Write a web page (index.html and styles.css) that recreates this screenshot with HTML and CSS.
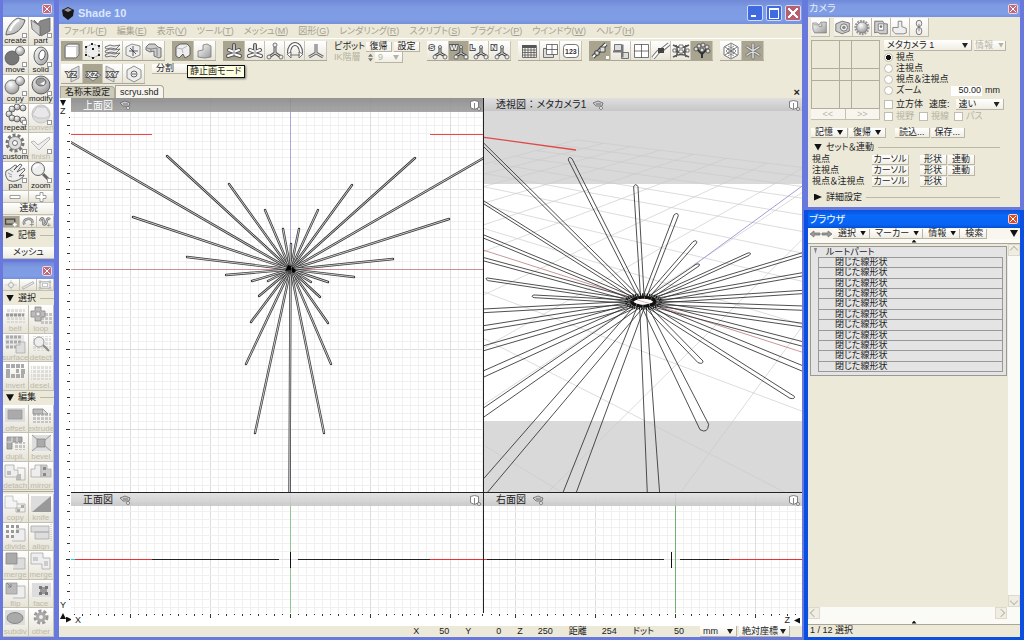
FILE: index.html
```
<!DOCTYPE html>
<html lang="ja">
<head>
    <meta charset="utf-8">
    <title>Shade 10</title>
    <link rel="stylesheet" href="styles.css">
</head>
<body>
    <svg class="defs" aria-hidden="true">
        <defs>
            <linearGradient id="metal" x1="0" y1="0" x2="1" y2="1"><stop offset="0" stop-color="#fff"/><stop offset="1" stop-color="#999"/></linearGradient>
            <radialGradient id="ball" cx=".4" cy=".3" r=".7"><stop offset="0" stop-color="#fff"/><stop offset="1" stop-color="#999"/></radialGradient>
            <pattern id="dots" width="4" height="4" patternUnits="userSpaceOnUse"><rect width="3" height="3" fill="#c4c4c4"/></pattern>
        </defs>
        <!-- tool palette -->
        <symbol id="create" viewBox="0 0 24 20"><path d="M3 18C3 12 9 3 15 1l7 2c-1 6-7 13-13 14z" fill="url(#metal)" stroke="#444"/><path d="M7 14c1-4 5-9 9-11" fill="none" stroke="#fff" stroke-width="2"/></symbol>
        <symbol id="part" viewBox="0 0 24 20"><path d="M5 3l4 4 2-3 10-3v13l-9 5z" fill="#888" stroke="#666"/><path d="M2 3l9 6v10l-8-7z" fill="#ccc" stroke="#666"/></symbol>
        <symbol id="move" viewBox="0 0 24 20"><circle cx="9" cy="12" r="7" fill="#777" stroke="#555"/><circle cx="17" cy="5" r="4.500" fill="url(#ball)" stroke="#555"/></symbol>
        <symbol id="solid" viewBox="0 0 24 20"><ellipse cx="12" cy="10" rx="7" ry="9" fill="url(#metal)" stroke="#444"/><ellipse cx="13" cy="9" rx="3" ry="5" fill="#fff" stroke="#444" transform="rotate(15 13 9)"/></symbol>
        <symbol id="copyball" viewBox="0 0 24 20"><circle cx="9" cy="12" r="7" fill="url(#ball)" stroke="#555"/><circle cx="17" cy="6" r="4.500" fill="url(#ball)" stroke="#555"/></symbol>
        <symbol id="modify" viewBox="0 0 24 20"><circle cx="12" cy="10" r="9" fill="url(#ball)" stroke="#444"/><ellipse cx="12" cy="7" rx="5" ry="4" fill="#999" stroke="#555"/><path d="M11 9l5-3-1 4z" fill="#fff"/></symbol>
        <symbol id="repeat" viewBox="0 0 24 20"><g fill="url(#ball)" stroke="#555"><circle cx="20" cy="4" r="3"/><circle cx="14" cy="3" r="3"/><circle cx="9" cy="5" r="3"/><circle cx="6" cy="10" r="3"/><circle cx="9" cy="14" r="3"/><circle cx="14" cy="15" r="3"/><circle cx="20" cy="16" r="3"/></g></symbol>
        <symbol id="convert" viewBox="0 0 24 20"><circle cx="12" cy="10" r="9" fill="#ddd" stroke="#bbb"/><path d="M3 11l6 3 8 0 4-3-4-8H8z" fill="#e8e8e8" stroke="#bbb"/></symbol>
        <symbol id="custom" viewBox="0 0 24 20"><circle cx="12" cy="10" r="8" fill="none" stroke="#777" stroke-width="3" stroke-dasharray="3 2"/><circle cx="12" cy="10" r="6.500" fill="#ddd" stroke="#666"/><circle cx="12" cy="10" r="2.500" fill="#fff" stroke="#555"/></symbol>
        <symbol id="finish" viewBox="0 0 24 20"><path d="M2 9l3-1 4 4 11-8 1 2-11 11z" fill="#eee" stroke="#aaa"/></symbol>
        <symbol id="pan" viewBox="0 0 24 20"><path d="M5 18c-2-3-3-5-2-9l4-2 5-4 2 1-3 4 6-6 2 1-5 7 7-4 1 2-6 6 5-1-1 2c-4 3-8 5-12 4z" fill="#eee" stroke="#444"/><path d="M7 8l3 2m-5 1l4 2m-3 1l3 1" stroke="#888"/></symbol>
        <symbol id="zoom" viewBox="0 0 24 20"><path d="M14 12l7 7" stroke="#666" stroke-width="3"/><circle cx="9" cy="7" r="6.500" fill="#eee" stroke="#444"/><path d="M5 6a5 5 0 0 1 5-3" stroke="#fff" stroke-width="2" fill="none"/></symbol>
        <symbol id="minus" viewBox="0 0 12 10"><path d="M1 3.500h10v3H1z" fill="#fff" stroke="#888"/></symbol>
        <symbol id="plus" viewBox="0 0 12 10"><path d="M5 .5h3v3h3v3H8v3H5v-3H1v-3h4z" fill="#fff" stroke="#888"/></symbol>
        <symbol id="sel-box" viewBox="0 0 16 12"><path d="M1.500 2.500h11v6h-11z" fill="none" stroke="#444" stroke-width="1.500"/><path d="M10 9h5m-2.500-2.500v5" stroke="#fff" stroke-width="2"/></symbol>
        <symbol id="sel-loop" viewBox="0 0 16 12"><path d="M4 9C-1 2 15-1 13 7" fill="none" stroke="#777" stroke-width="3"/><path d="M4 9C-1 2 15-1 13 7" fill="none" stroke="#fff"/><path d="M10 9h5m-2.500-2.500v5" stroke="#777"/></symbol>
        <symbol id="sel-free" viewBox="0 0 16 12"><path d="M2 5c2-6 5-3 4 1s3 4 4-1 3-3 4-2" fill="none" stroke="#777" stroke-width="3"/><path d="M2 5c2-6 5-3 4 1s3 4 4-1 3-3 4-2" fill="none" stroke="#fff"/><path d="M10 10h5m-2.500-2.500v4" stroke="#777"/></symbol>
        <!-- mesh palette -->
        <symbol id="m-vertex" viewBox="0 0 16 12"><path d="M8 0v12M1 6h14" stroke="#bbb"/><circle cx="8" cy="6" r="3" fill="#eee" stroke="#999"/></symbol>
        <symbol id="m-edge" viewBox="0 0 16 12"><path d="M1 9l13-7 1 2-13 7z" fill="#eee" stroke="#999"/></symbol>
        <symbol id="m-face" viewBox="0 0 16 12"><path d="M2 2h12v8H2z" fill="#eee" stroke="#999"/><path d="M5 4h6v4H5zM1 1h2v2H1zM13 1h2v2h-2zM1 9h2v2H1zM13 9h2v2h-2z" fill="#fff" stroke="#999" stroke-width=".7"/></symbol>
        <symbol id="belt" viewBox="0 0 24 20"><rect x="3" y="3" width="19" height="15" fill="url(#dots)" opacity=".5"/><path d="M3 10h18" stroke="#999" stroke-width="3" stroke-dasharray="3 1"/></symbol>
        <symbol id="loop" viewBox="0 0 24 20"><rect x="12" y="8" width="11" height="11" fill="url(#dots)"/><path d="M6 2h6v4h4v6h-4v4H6v-4H2V6h4z" fill="#bbb" stroke="#888"/><path d="M7 7h4v4H7z" fill="#eee" stroke="#888"/></symbol>
        <symbol id="surface" viewBox="0 0 24 20"><path d="M2 1h19v13H2z" fill="#e8e8e8"/><path d="M3 3h16M3 8h16M3 13h16" stroke="#aaa" stroke-width="3" stroke-dasharray="3 1"/><path d="M13 19v-8h4V8h5v11z" fill="#ddd" stroke="#aaa"/></symbol>
        <symbol id="detect" viewBox="0 0 24 20"><rect x="3" y="2" width="19" height="15" fill="url(#dots)" opacity=".5"/><path d="M14 11l6 6" stroke="#888" stroke-width="2"/><circle cx="10" cy="8" r="5" fill="#eee" stroke="#888"/></symbol>
        <symbol id="invert" viewBox="0 0 24 20"><path d="M3 4h18M3 14h18" stroke="#aaa" stroke-width="4" stroke-dasharray="4 1"/><path d="M3 7h4v5H3zM13 7h3v4h-3zM18 7h4v5h-4z" fill="#aaa"/></symbol>
        <symbol id="desel" viewBox="0 0 24 20"><rect x="2" y="3" width="20" height="15" fill="url(#dots)" opacity=".5"/></symbol>
        <symbol id="offset" viewBox="0 0 24 20"><path d="M2 3h20v14H2z" fill="#ddd"/><path d="M5 5h14v9H5z" fill="#aaa" stroke="#999"/></symbol>
        <symbol id="extrude" viewBox="0 0 24 20"><rect x="3" y="8" width="19" height="10" fill="url(#dots)"/><path d="M4 4h10v5H4z" fill="#bbb" stroke="#888"/><path d="M14 4l5 5-5 0" fill="#ddd" stroke="#888"/></symbol>
        <symbol id="dupli" viewBox="0 0 24 20"><rect x="12" y="9" width="10" height="8" fill="url(#dots)"/><path d="M4 4h15v5H9v7H4z" fill="#aaa" stroke="#888"/><path d="M9 4v5H4m10-5v5" fill="none" stroke="#eee"/></symbol>
        <symbol id="bevel" viewBox="0 0 24 20"><path d="M3 2h19v16H3z" fill="#ddd"/><path d="M3 2l6 5m7 0l6-5M9 13l-6 5m13-5l6 5" stroke="#888"/><path d="M8 6h8v8H8z" fill="#aaa" stroke="#888"/></symbol>
        <symbol id="detach" viewBox="0 0 24 20"><path d="M2 3h9v5h4v7H2z" fill="#eee" stroke="#aaa"/><path d="M4 9h4v4H4zM15 12h3v6h-5v-4z" fill="#bbb"/><path d="M14 6h8v12h-9" fill="none" stroke="#aaa"/></symbol>
        <symbol id="mirror" viewBox="0 0 24 20"><path d="M2 7h4V3h6v12H2z" fill="#eee" stroke="#aaa"/><path d="M22 7h-4V3h-6v12h10z" fill="#ccc" stroke="#aaa"/><path d="M14 5h3v3h-3zM14 11h3v3h-3z" fill="#888"/></symbol>
        <symbol id="facecopy" viewBox="0 0 24 20"><path d="M2 2h8v5h4v7H2z" fill="#f4f4f4" stroke="#bbb"/><path d="M14 10h8v8h-9v-4h5" fill="none" stroke="#aaa"/><path d="M14 15h3v3h-3zM18 11h3v3h-3z" fill="#aaa"/></symbol>
        <symbol id="knife" viewBox="0 0 24 20"><path d="M2 2h20v16H2z" fill="#ddd"/><path d="M22 2v16H3z" fill="#999"/></symbol>
        <symbol id="divide" viewBox="0 0 24 20"><path d="M13 6h9v12H9" fill="#eee" stroke="#aaa"/><path d="M3 2h3v3H3zM8 2h3v3H8zM13 2h3v3h-3zM3 7h3v3H3zM8 7h3v3H8zM13 7h3v3h-3zM3 12h3v3H3zM8 12h3v3H8z" fill="#999"/></symbol>
        <symbol id="align" viewBox="0 0 24 20"><path d="M2 3h18v6H2zM6 9h14v7H6z" fill="#ddd" stroke="#aaa"/><path d="M22 1v17" stroke="#aaa" stroke-dasharray="1 1"/></symbol>
        <symbol id="merge" viewBox="0 0 24 20"><path d="M12 7h10v11H10" fill="#ddd" stroke="#aaa"/><path d="M3 2h11v11H3z" fill="#aaa" stroke="#888"/></symbol>
        <symbol id="merge2" viewBox="0 0 24 20"><path d="M2 2h12v5h7v11h-8v-5H2z" fill="#eee" stroke="#aaa"/><path d="M4 6h5v4H4zM15 10h4v5h-4z" fill="#ccc"/></symbol>
        <symbol id="flip" viewBox="0 0 24 20"><path d="M12 6h10v12H10" fill="#eee" stroke="#aaa"/><path d="M3 3h11v11H3z" fill="#bbb" stroke="#999"/><path d="M4 3l4 4v-3m0 3H5" stroke="#777" fill="none"/></symbol>
        <symbol id="face" viewBox="0 0 24 20"><path d="M3 3h19v14H3z" fill="#ddd"/><path d="M11 7h7v7h-7z" fill="#999"/><path d="M10 6h3v3h-3zM16 6h3v3h-3zM10 12h3v3h-3zM16 12h3v3h-3z" fill="#777"/></symbol>
        <symbol id="subdiv" viewBox="0 0 24 20"><path d="M2 2h20v15H2z" fill="#ddd"/><ellipse cx="12" cy="10" rx="8" ry="5.500" fill="#aaa" stroke="#777"/></symbol>
        <symbol id="other" viewBox="0 0 24 20"><circle cx="12" cy="9" r="6" fill="none" stroke="#999" stroke-width="3" stroke-dasharray="3 2"/><circle cx="12" cy="9" r="5" fill="#aaa"/><circle cx="12" cy="9" r="2" fill="#eee"/></symbol>
        <!-- main toolbar, 20 x 18 -->
        <symbol id="cube" viewBox="0 0 20 18"><path d="M3 4l3-2h11v11l-3 3H3z" fill="#ccc" stroke="#666"/><path d="M4 5h10v10H4zM5 4l2-1h9l-2 1z" fill="#fff"/></symbol>
        <symbol id="cubepts" viewBox="0 0 20 18"><path d="M3 5l6-3 7 2v9l-6 3-7-3z" fill="#eee" stroke="#777" stroke-dasharray="2 1"/><path d="M2 4h2v2H2zM8 1h2v2H8zM15 3h2v2h-2zM2 12h2v2H2zM9 15h2v2H9zM15 12h2v2h-2zM9 6h2v2H9z" fill="#222"/></symbol>
        <symbol id="layers" viewBox="0 0 20 18"><g fill="#eee" stroke="#555"><path d="M2 13l5-2 4 1 6-1-4 4-5-1-5 1z"/><path d="M2 9l5-2 4 1 6-1-4 4-5-1-5 1z"/><path d="M2 5l5-2 4 1 6-1-4 4-5-1-5 1z"/></g></symbol>
        <symbol id="cubestar" viewBox="0 0 20 18"><path d="M3 5l6-3 8 2v9l-7 3-7-3z" fill="#eee" stroke="#777"/><path d="M10 4v10M6 9h9M7 6l6 6" stroke="#333"/></symbol>
        <symbol id="pipe" viewBox="0 0 20 18"><path d="M2 5l3-3h6l3 3 3 1v9l-2 1-5-2V9L6 10 2 8z" fill="#ccc" stroke="#555"/><path d="M3 6l4 1 6-1v8M7 7v3" fill="none" stroke="#777"/></symbol>
        <symbol id="blob" viewBox="0 0 20 18"><path d="M3 5l4-3h7l3 3v8l-5 3-2-4-4 4-3-2z" fill="#eee" stroke="#444"/><path d="M4 6l5 1 5-3M9 7l1 4" fill="none" stroke="#aaa"/></symbol>
        <symbol id="boot" viewBox="0 0 20 18"><path d="M8 3l4-1 4 2v11l-6 1-7-1V9l5-1z" fill="url(#metal)" stroke="#777"/></symbol>
        <symbol id="figure" viewBox="0 0 20 18"><path d="M10 3v9M5 8l5 2 5-2M4 14l6-2 6 2" stroke="#555" stroke-width="4" stroke-linecap="round" fill="none"/><path d="M10 3v9M5 8l5 2 5-2M4 14l6-2 6 2" stroke="#fff" stroke-width="2" stroke-linecap="round" fill="none"/><path d="M10 2v13" stroke="#666"/></symbol>
        <symbol id="joint" viewBox="0 0 20 18"><path d="M10 5v6l-6 4M10 11l6 4" stroke="#555" stroke-width="3" fill="none"/><path d="M10 5v6l-6 4M10 11l6 4" stroke="#fff" fill="none"/><g fill="#eee" stroke="#555"><circle cx="10" cy="3" r="2"/><circle cx="4" cy="15" r="2"/><circle cx="16" cy="15" r="2"/></g></symbol>
        <symbol id="ring" viewBox="0 0 20 18"><path d="M4 11c0-12 12-12 12 0" fill="none" stroke="#555" stroke-width="4"/><path d="M4 11c0-12 12-12 12 0" fill="none" stroke="#fff" stroke-width="2"/><path d="M5 13h10M2 12l4-2v6zM18 12l-4-2v6z" fill="#fff" stroke="#555"/></symbol>
        <symbol id="axes" viewBox="0 0 20 18"><path d="M10 2v9l-7 4m7-4l7 4" fill="none" stroke="#666" stroke-width="3"/><path d="M10 2v9l-7 4m7-4l7 4" fill="none" stroke="#fff"/></symbol>
        <symbol id="stick" viewBox="0 0 20 18"><path d="M12 5v6l-5 3m5-3l5 3" fill="none" stroke="#444" stroke-width="3"/><path d="M12 5v6l-5 3m5-3l5 3" fill="none" stroke="#fff"/><g fill="#eee" stroke="#555"><circle cx="12" cy="5" r="1.500"/><circle cx="7" cy="15" r="2"/><circle cx="17" cy="15" r="2"/></g></symbol>
        <symbol id="gridico" viewBox="0 0 20 18"><path d="M3 3h14v3H3z" fill="#555"/><path d="M3.500 3.500h14v12h-14zM3 8h14M3 10.500h14M3 13h14M6 6v10m3-10v10m3-10v10m3-10v10" fill="none" stroke="#555"/></symbol>
        <symbol id="windows" viewBox="0 0 20 18"><path d="M3.500 6.500h10v9h-10z" fill="#ddd" stroke="#555"/><path d="M6.500 2.500h11v10h-11zM12 2v11M6 7.500h12" fill="#fff" stroke="#555"/></symbol>
        <symbol id="numbox" viewBox="0 0 20 18"><rect x="2.500" y="2.500" width="15" height="13" rx="3" fill="#fff" stroke="#555"/></symbol>
        <symbol id="link" viewBox="0 0 20 18"><path d="M3 15L16 2" stroke="#444" stroke-width="4"/><path d="M3 15L16 2" stroke="#fff" stroke-width="2"/><path d="M10 5h5v5h-5zM5 9h4v4H5z" fill="#ddd" stroke="#333"/><path d="M16 14h3v3h-3z" fill="#fff"/></symbol>
        <symbol id="blocks" viewBox="0 0 20 18"><path d="M3.500 2.500h7v6h-7zM10.500 10.500h7v6h-7z" fill="#ddd" stroke="#555"/><path d="M2 9.500h10m-.5-7v13" stroke="#777" stroke-width="2"/></symbol>
        <symbol id="quad" viewBox="0 0 20 18"><path d="M3.500 2.500h14v13h-14zM10.500 2v14M3 9h15" fill="#fff" stroke="#555"/></symbol>
        <symbol id="diag" viewBox="0 0 20 18"><path d="M2 16L7 10 12 7 18 2" fill="none" stroke="#777" stroke-width="4"/><path d="M2 16L7 10 12 7 18 2" fill="none" stroke="#fff" stroke-width="2"/><path d="M7 6h6v5H7z" fill="#444"/></symbol>
        <symbol id="mesh" viewBox="0 0 20 18"><path d="M2 3c5 3 11 3 16 0M2 8c5 3 11 3 16 0M2 15c5-3 11-3 16 0M5 3c2 5 2 8 0 12M15 3c-2 5-2 8 0 12" fill="none" stroke="#555" stroke-width="1.500"/><path d="M8 3h4v3H8zM8 8h4v3H8zM2 7h3v3H2zM15 7h3v3h-3z" fill="#fff" stroke="#555"/></symbol>
        <symbol id="tree" viewBox="0 0 20 18"><path d="M10 16V8m0 4L5 7m5 5l5-5" stroke="#333" stroke-width="2" fill="none"/><g fill="#ddd" stroke="#444"><circle cx="4" cy="7" r="2"/><circle cx="7" cy="4" r="2"/><circle cx="11" cy="3" r="2"/><circle cx="15" cy="5" r="2"/><circle cx="16" cy="9" r="2"/><circle cx="10" cy="8" r="2"/></g></symbol>
        <symbol id="hexstar" viewBox="0 0 20 18"><path d="M10 1l7 4v8l-7 4-7-4V5z" fill="#fff" stroke="#555"/><path d="M10 2v14M4 5l12 8M16 5L4 13" stroke="#555"/><path d="M7 4l3 2 3-2M7 14l3-2 3 2M5 9l3-3v6zm10 0l-3-3v6z" stroke="#777" fill="none"/></symbol>
        <symbol id="star" viewBox="0 0 20 18"><path d="M10 2v14M4 5l12 8M16 5L4 13" stroke="#777" stroke-width="3" stroke-linecap="round"/><path d="M10 2v14M4 5l12 8M16 5L4 13" stroke="#ddd" stroke-width="1.500" stroke-linecap="round"/></symbol>
        <symbol id="plane-yz" viewBox="0 0 20 18"><path d="M9 5l8-4v12l-8 4z" fill="#ddd" stroke="#888"/></symbol>
        <symbol id="plane-xz" viewBox="0 0 20 18"><path d="M2 10l8-4 8 4-8 6z" fill="#ddd" stroke="#666"/></symbol>
        <symbol id="plane-xy" viewBox="0 0 20 18"><path d="M3 1l8 4v12l-8-4z" fill="#ddd" stroke="#888"/></symbol>
        <symbol id="hex" viewBox="0 0 20 18"><path d="M10 1l7 4v8l-7 4-7-4V5z" fill="#eee" stroke="#777"/><circle cx="10" cy="9" r="3" fill="none" stroke="#444"/><path d="M8 9h4" stroke="#444"/></symbol>
        <symbol id="eye" viewBox="0 0 12 12"><path d="M1 4l5-2 5 2-1 3-6 0z" fill="#ccc" stroke="#666"/><path d="M4 5h5" stroke="#555"/><circle cx="9" cy="9" r="1.500" fill="#fff" stroke="#666"/></symbol>
        <symbol id="viewcube" viewBox="0 0 12 12"><path d="M1.500 2.500l4-1 4 1v6l-4 2-4-2zM5.500 4v6" fill="#fff" stroke="#666"/><circle cx="10" cy="10" r="1.500" fill="#fff" stroke="#666"/></symbol>
        <!-- camera toolbar -->
        <symbol id="c-board" viewBox="0 0 20 18"><path d="M2 4h4l3 2 2-3h6v12H4l-2-4z" fill="url(#metal)" stroke="#777"/><path d="M3 6h4l2 2h3V4" fill="none" stroke="#888"/></symbol>
        <symbol id="c-camera" viewBox="0 0 20 18"><path d="M2 5l7-3 8 2v9l-8 3-7-3z" fill="#ccc" stroke="#555"/><circle cx="11" cy="9" r="4" fill="#eee" stroke="#555"/><circle cx="11" cy="9" r="2" fill="#888"/></symbol>
        <symbol id="c-light" viewBox="0 0 20 18"><circle cx="10" cy="9" r="7" fill="none" stroke="#999" stroke-width="3" stroke-dasharray="2 1"/><circle cx="10" cy="9" r="6" fill="url(#ball)" stroke="#777"/></symbol>
        <symbol id="c-back" viewBox="0 0 20 18"><path d="M3 2h9c1 3 3 3 5 3v11H9c-2-2-4-2-6-1z" fill="#ccc" stroke="#555"/><path d="M7 5h6v7H7z" fill="#fff" stroke="#666"/><circle cx="10" cy="8" r="1.500" fill="#777"/></symbol>
        <symbol id="c-hand" viewBox="0 0 20 18"><path d="M8 2h4v6l5 2v5l-3 1H5l-3-3V9h6z" fill="#eee" stroke="#666"/></symbol>
        <symbol id="c-switch" viewBox="0 0 20 18"><rect x="7" y="1" width="6" height="7" rx="3" fill="#eee" stroke="#555"/><rect x="7" y="9" width="6" height="8" rx="3" fill="#eee" stroke="#555"/><path d="M10 5v8" stroke="#666"/></symbol>
        <symbol id="arrow-l" viewBox="0 0 12 8"><path d="M1 4l4-3v2h6v2H5v2z" fill="#999" stroke="#777"/></symbol>
        <symbol id="arrow-r" viewBox="0 0 12 8"><path d="M11 4L7 1v2H1v2h6v2z" fill="#999" stroke="#777"/></symbol>
        <symbol id="logo" viewBox="0 0 14 14"><path d="M1 4l6-3 6 3-1 6-5 4-5-4z" fill="#181818"/><path d="M3 4l4-2 4 2-4 2z" fill="#999"/></symbol>
    </svg>

    <aside class="palettes">
        <section class="window palette">
            <header class="titlebar"><button class="close" aria-label="close"></button></header>
            <div class="tools">
                <button><svg><use href="#create"/></svg>create</button>
                <button><svg><use href="#part"/></svg>part</button>
                <button><svg><use href="#move"/></svg>move</button>
                <button><svg><use href="#solid"/></svg>solid</button>
                <button><svg><use href="#copyball"/></svg>copy</button>
                <button><svg><use href="#modify"/></svg>modify</button>
                <button><svg><use href="#repeat"/></svg>repeat</button>
                <button class="off"><svg><use href="#convert"/></svg>convert</button>
                <button><svg><use href="#custom"/></svg>custom</button>
                <button class="off"><svg><use href="#finish"/></svg>finish</button>
                <button><svg><use href="#pan"/></svg>pan</button>
                <button><svg><use href="#zoom"/></svg>zoom</button>
            </div>
            <div class="strip">
                <button aria-label="zoom out"><svg><use href="#minus"/></svg></button>
                <button aria-label="zoom in"><svg><use href="#plus"/></svg></button>
            </div>
            <button class="wide">連続</button>
            <div class="strip">
                <button class="on" aria-label="box"><svg><use href="#sel-box"/></svg></button>
                <button aria-label="loop"><svg><use href="#sel-loop"/></svg></button>
                <button aria-label="free"><svg><use href="#sel-free"/></svg></button>
            </div>
            <h2 class="fold"><i class="tri right"></i>記憶</h2>
            <button class="wide last">メッシュ</button>
        </section>
        <section class="window palette grow">
            <header class="titlebar"><button class="close" aria-label="close"></button></header>
            <div class="strip">
                <button aria-label="vertex"><svg><use href="#m-vertex"/></svg></button>
                <button aria-label="edge"><svg><use href="#m-edge"/></svg></button>
                <button aria-label="face"><svg><use href="#m-face"/></svg></button>
            </div>
            <h2 class="fold"><i class="tri"></i>選択</h2>
            <div class="tools mesh">
                <button class="off"><svg><use href="#belt"/></svg>belt</button>
                <button class="off"><svg><use href="#loop"/></svg>loop</button>
                <button class="off"><svg><use href="#surface"/></svg>surface</button>
                <button class="off"><svg><use href="#detect"/></svg>detect</button>
                <button class="off"><svg><use href="#invert"/></svg>invert</button>
                <button class="off"><svg><use href="#desel"/></svg>desel.</button>
            </div>
            <h2 class="fold"><i class="tri"></i>編集</h2>
            <div class="tools mesh">
                <button class="off"><svg><use href="#offset"/></svg>offset</button>
                <button class="off"><svg><use href="#extrude"/></svg>extrude</button>
                <button class="off"><svg><use href="#dupli"/></svg>dupli.</button>
                <button class="off"><svg><use href="#bevel"/></svg>bevel</button>
                <button class="off"><svg><use href="#detach"/></svg>detach</button>
                <button class="off"><svg><use href="#mirror"/></svg>mirror</button>
            </div>
            <hr>
            <div class="tools mesh long">
                <button class="off"><svg><use href="#facecopy"/></svg>copy</button>
                <button class="off"><svg><use href="#knife"/></svg>knife</button>
                <button class="off"><svg><use href="#divide"/></svg>divide</button>
                <button class="off"><svg><use href="#align"/></svg>align</button>
                <button class="off"><svg><use href="#merge"/></svg>merge</button>
                <button class="off"><svg><use href="#merge2"/></svg>merge</button>
                <button class="off"><svg><use href="#flip"/></svg>flip</button>
                <button class="off"><svg><use href="#face"/></svg>face</button>
                <button class="off"><svg><use href="#subdiv"/></svg>subdiv</button>
                <button class="off"><svg><use href="#other"/></svg>other</button>
            </div>
        </section>
    </aside>

    <main class="window app">
        <header class="titlebar">
            <svg class="logo"><use href="#logo"/></svg>
            <h1>Shade 10</h1>
            <button class="cap min" aria-label="minimize"></button>
            <button class="cap max" aria-label="maximize"></button>
            <button class="close cap" aria-label="close"></button>
        </header>
        <nav class="menu">
            <a href="#">ファイル(<u>F</u>)</a>
            <a href="#">編集(<u>E</u>)</a>
            <a href="#">表示(<u>V</u>)</a>
            <a href="#">ツール(<u>T</u>)</a>
            <a href="#">メッシュ(<u>M</u>)</a>
            <a href="#">図形(<u>G</u>)</a>
            <a href="#">レンダリング(<u>R</u>)</a>
            <a href="#">スクリプト(<u>S</u>)</a>
            <a href="#">プラグイン(<u>P</u>)</a>
            <a href="#">ウインドウ(<u>W</u>)</a>
            <a href="#">ヘルプ(<u>H</u>)</a>
        </nav>
        <div class="toolbar">
            <div class="group">
                <button class="on"><svg><use href="#cube"/></svg></button>
                <button><svg><use href="#cubepts"/></svg></button>
                <button><svg><use href="#layers"/></svg></button>
                <button><svg><use href="#cubestar"/></svg></button>
                <button><svg><use href="#pipe"/></svg></button>
            </div>
            <div class="group">
                <button class="on"><svg><use href="#blob"/></svg></button>
                <button><svg><use href="#boot"/></svg></button>
            </div>
            <div class="group">
                <button class="on"><svg><use href="#figure"/></svg></button>
                <button><svg><use href="#figure"/></svg></button>
                <button><svg><use href="#joint"/></svg></button>
                <button><svg><use href="#ring"/></svg></button>
                <button><svg><use href="#axes"/></svg></button>
            </div>
            <div class="pivot">
                <span>ピボット</span>
                <span class="pair"><button class="flat">復帰</button><button class="flat">設定</button></span>
                <label class="dim" for="ik">IK階層</label>
                <span class="pair"><i class="spin"></i><span class="pick dim"><select id="ik" disabled><option>9</option></select></span></span>
            </div>
            <div class="group">
                <button><svg><use href="#stick"/><text x="1" y="8" class="tag">S</text></svg></button>
                <button class="on"><svg><use href="#stick"/><text x="1" y="8" class="tag">W</text></svg></button>
                <button><svg><use href="#stick"/><text x="1" y="8" class="tag">L</text></svg></button>
                <button><svg><use href="#stick"/><text x="1" y="8" class="tag">N</text></svg></button>
            </div>
            <div class="group">
                <button><svg><use href="#gridico"/></svg></button>
                <button><svg><use href="#windows"/></svg></button>
                <button><svg><use href="#numbox"/><text x="4" y="12" class="numtext">123</text></svg></button>
            </div>
            <div class="group">
                <button class="on"><svg><use href="#link"/></svg></button>
                <button><svg><use href="#blocks"/></svg></button>
                <button><svg><use href="#quad"/></svg></button>
                <button><svg><use href="#diag"/></svg></button>
                <button><svg><use href="#mesh"/></svg></button>
                <button class="on"><svg><use href="#tree"/></svg></button>
            </div>
            <div class="group">
                <button><svg><use href="#hexstar"/></svg></button>
                <button class="on"><svg><use href="#star"/></svg></button>
            </div>
        </div>
        <div class="toolbar second">
            <div class="group">
                <button><svg><use href="#plane-yz"/><text x="4" y="12" class="tag">YZ</text></svg></button>
                <button class="on"><svg><use href="#plane-xz"/><text x="4" y="12" class="tag">XZ</text></svg></button>
                <button><svg><use href="#plane-xy"/><text x="4" y="12" class="tag">XY</text></svg></button>
                <button><svg><use href="#hex"/></svg></button>
            </div>
            <div class="split">
                <button class="flat">分割</button>
                <span class="tooltip" role="tooltip">静止画モード</span>
            </div>
        </div>
        <div class="tabs">
            <button>名称未設定</button>
            <button class="current">scryu.shd</button>
            <button class="tabclose" aria-label="close tab">×</button>
        </div>
        <div class="views">
            <div class="ruler side"><svg id="ruler-top"></svg><i class="tri"></i><b>Z</b></div>
            <section class="view"><svg class="scene" id="top"></svg>
                <header class="viewbar active"><h3>上面図</h3><svg><use href="#eye"/></svg><svg class="end"><use href="#viewcube"/></svg></header>
            </section>
            <section class="view"><svg class="scene" id="persp"></svg>
                <header class="viewbar"><h3>透視図 ： メタカメラ1</h3><svg><use href="#eye"/></svg><svg class="end"><use href="#viewcube"/></svg></header>
            </section>
            <div class="ruler side"><svg id="ruler-front"></svg><b class="low">Y</b></div>
            <section class="view"><svg class="scene" id="front"></svg>
                <header class="viewbar"><h3>正面図</h3><svg><use href="#eye"/></svg><svg class="end"><use href="#viewcube"/></svg></header>
            </section>
            <section class="view"><svg class="scene" id="right"></svg>
                <header class="viewbar"><h3>右面図</h3><svg><use href="#eye"/></svg><svg class="end"><use href="#viewcube"/></svg></header>
            </section>
            <div class="ruler corner"><i class="tri up"></i><i class="tri right"></i></div>
            <div class="ruler"><svg id="ruler-x"></svg><b>X</b></div>
            <div class="ruler end"><svg id="ruler-z"></svg><b>Z</b><i class="tri left"></i></div>
        </div>
        <footer class="status">
            <span>X</span><output>50</output>
            <span>Y</span><output>0</output>
            <span>Z</span><output>250</output>
            <span>距離</span><output>254</output>
            <span>ドット</span><output>50</output>
            <span class="pick unit"><select aria-label="単位"><option>mm</option></select></span>
            <span class="pick coord"><select aria-label="座標"><option>絶対座標</option></select></span>
        </footer>
    </main>

    <aside class="panels">
        <section class="window panel">
            <header class="titlebar"><h2>カメラ</h2><button class="close" aria-label="close"></button></header>
            <div class="camera-tools">
                <button><svg><use href="#c-board"/></svg></button>
                <button class="first"><svg><use href="#c-camera"/></svg></button>
                <button><svg><use href="#c-light"/></svg></button>
                <button><svg><use href="#c-back"/></svg></button>
                <button><svg><use href="#c-hand"/></svg></button>
                <button><svg><use href="#c-switch"/></svg></button>
            </div>
            <div class="camera">
                <div class="padbox">
                    <div class="pad"><i></i><i></i><i></i><i></i><i></i><i></i><i></i><i></i><i></i></div>
                    <div class="step"><button>&lt;&lt;</button><button>&gt;&gt;</button></div>
                </div>
                <div class="options">
                    <div class="line"><span class="pick cam"><select aria-label="カメラ"><option>メタカメラ 1</option></select></span><button class="flat dim">情報<i class="tri"></i></button></div>
                    <label><input type="radio" name="target" checked>視点</label>
                    <label><input type="radio" name="target">注視点</label>
                    <label><input type="radio" name="target">視点＆注視点</label>
                    <div class="line zoomline"><label><input type="radio" name="target">ズーム</label><input class="num" type="text" value="50.00" aria-label="ズーム"><span>mm</span></div>
                    <div class="line speed"><label><input type="checkbox">立方体</label><label for="speed">速度:</label><span class="pick"><select id="speed"><option>速い</option></select></span></div>
                    <div class="line dim"><label><input type="checkbox" disabled>視野</label><label><input type="checkbox" disabled>視線</label><label><input type="checkbox" disabled>パス</label></div>
                </div>
            </div>
            <div class="line memory">
                <button class="flat">記憶<i class="tri"></i></button><button class="flat">復帰<i class="tri"></i></button>
                <button class="flat load">読込...</button><button class="flat">保存...</button>
            </div>
            <h3 class="fold"><i class="tri"></i>セット＆連動</h3>
            <div class="sets">
                <span>視点</span><button class="flat">カーソル</button><button class="flat shape">形状</button><button class="flat">連動</button>
                <span>注視点</span><button class="flat">カーソル</button><button class="flat shape">形状</button><button class="flat">連動</button>
                <span>視点＆注視点</span><button class="flat">カーソル</button><button class="flat shape">形状</button>
            </div>
            <h3 class="fold"><i class="tri right"></i>詳細設定</h3>
        </section>
        <section class="window panel browser">
            <header class="titlebar"><h2>ブラウザ</h2><button class="close" aria-label="close"></button></header>
            <div class="line browser-tools">
                <button class="arrow" aria-label="back"><svg><use href="#arrow-l"/></svg></button><button class="arrow" aria-label="forward"><svg><use href="#arrow-r"/></svg></button>
                <button class="flat">選択<i class="tri"></i></button><button class="flat">マーカー<i class="tri"></i></button><button class="flat">情報<i class="tri"></i></button><button class="flat">検索</button>
                <i class="tri menu-tri"></i>
            </div>
            <div class="splitter"><i class="tri up"></i></div>
            <div class="listing">
                <div class="tree">
                    <div class="root"><i class="tri"></i>ルートパート</div>
                    <ul>
                        <li>閉じた線形状</li><li>閉じた線形状</li><li>閉じた線形状</li><li>閉じた線形状</li>
                        <li>閉じた線形状</li><li>閉じた線形状</li><li>閉じた線形状</li><li>閉じた線形状</li>
                        <li>閉じた線形状</li><li>閉じた線形状</li><li>閉じた線形状</li>
                    </ul>
                </div>
                <div class="vscroll"><i class="chev up"></i><i class="chev"></i></div>
            </div>
            <div class="hscroll"><i class="chev left"></i><i class="chev right"></i></div>
            <div class="splitter"><i class="tri up"></i></div>
            <footer class="count">1 / 12 選択</footer>
        </section>
    </aside>
    <script src="scene.js"></script>
</body>
</html>
```
FILE: styles.css
```
* {
    box-sizing: border-box;
}
body {
    margin: 0;
    min-height: 100vh;
    display: grid;
    grid-template-columns: 56px 1fr 220px;
    background: #4a7fd8;
    color: #222;
    font: 9px/11px "Liberation Sans", "Noto Sans CJK JP", sans-serif;
    font-feature-settings: "palt";
}
.defs {
    position: absolute;
    width: 0;
    height: 0;
}
h1, h2, h3, ul, hr {
    margin: 0;
    padding: 0;
    font-size: inherit;
    font-weight: normal;
}
button, input, select {
    margin: 0;
    padding: 0;
    border: 0;
    border-radius: 0;
    color: inherit;
    font: inherit;
    font-feature-settings: inherit;
}
svg {
    display: block;
    stroke-width: .8;
}
.numtext {
    font: bold 7px "Liberation Sans", sans-serif;
    fill: #333;
}
.tag {
    font: bold 8px "Liberation Sans", sans-serif;
    fill: #fff;
    stroke: #555;
    stroke-width: 2px;
    paint-order: stroke;
}

/* windows */
.window {
    display: flex;
    flex-direction: column;
    background: #ece9d8;
    border: solid #6878dc;
    border-width: 0 2px 3px 3px;
}
.titlebar {
    display: flex;
    align-items: center;
    justify-content: flex-end;
    flex: none;
    height: 17px;
    background: linear-gradient(#7088d8, #7d9ae2 30%, #7f9ee6 80%, #7790dc);
    color: #e4ecfc;
}
.close {
    width: 10px;
    height: 10px;
    padding: 1px;
    border: 1px solid #e8d8e8;
    border-radius: 2px;
    background:
        linear-gradient(45deg, transparent 42%, #fff 42%, #fff 58%, transparent 58%) content-box,
        linear-gradient(-45deg, transparent 42%, #fff 42%, #fff 58%, transparent 58%) content-box,
        #c06a80;
}
.palettes, .panels {
    display: flex;
    flex-direction: column;
}
.grow, .browser {
    flex: 1;
}
.palette .titlebar {
    padding-right: 2px;
}

/* palettes */
.tools {
    display: grid;
    grid-template-columns: 1fr 1fr;
}
.tools button {
    position: relative;
    display: flex;
    flex-direction: column;
    align-items: center;
    height: 29px;
    overflow: hidden;
    font: 8px/7px "Liberation Sans", sans-serif;
    background: linear-gradient(#fff, #e6e3d6);
    border: solid #c4c1b2;
    border-width: 0 1px 1px 0;
}
.tools button::after {
    content: "";
    position: absolute;
    right: 1px;
    bottom: 7px;
    width: 3px;
    height: 3px;
    border: 1px solid #999;
    background: #fff;
}
.tools svg {
    flex: none;
    width: 24px;
    height: 20px;
}
.tools .off {
    color: #bcb9aa;
}
.tools.mesh {
    flex: 3;
    grid-auto-rows: 1fr;
}
.tools.long {
    flex: 5;
}
.tools.mesh button {
    height: auto;
}
.tools.mesh button::after {
    display: none;
}
.strip {
    display: flex;
    flex: none;
    height: 12px;
}
.strip button {
    flex: 1;
    display: flex;
    align-items: center;
    justify-content: center;
    background: linear-gradient(#fff, #e6e3d6);
    border: solid #c4c1b2;
    border-width: 0 1px 1px 0;
}
.strip svg {
    width: 16px;
    height: 10px;
}
.strip .on {
    background: #a9a592;
}
.wide {
    height: 12px;
    margin-bottom: 1px;
    background: linear-gradient(#fff, #eeebe0);
    border-bottom: 1px solid #c4c1b2;
}
.wide.last {
    margin: 5px 0 0;
}
.fold {
    display: flex;
    align-items: center;
    flex: none;
    gap: 4px;
    height: 14px;
    padding-left: 3px;
}
.fold::after {
    content: "";
    flex: 1;
    border-top: 1px solid #bbb8a8;
}
.palette hr {
    border: 0;
    border-top: 1px solid #aaa89a;
    margin: 1px 0 2px;
}
.tri {
    flex: none;
    width: 8px;
    height: 7px;
    background: #111;
    clip-path: polygon(0 0, 100% 0, 50% 100%);
}
.tri.up {
    clip-path: polygon(0 100%, 100% 100%, 50% 0);
}
.tri.right {
    clip-path: polygon(0 0, 100% 50%, 0 100%);
}
.tri.left {
    clip-path: polygon(100% 0, 0 50%, 100% 100%);
}

/* main window */
.app {
    min-width: 0;
}
.app > .titlebar {
    height: 24px;
    padding: 2px 1px 0 2px;
    gap: 3px;
}
.logo {
    width: 14px;
    height: 14px;
}
h1 {
    flex: 1;
    font-weight: bold;
    font-size: 11px;
    color: #dce6fc;
}
.cap {
    width: 16px;
    height: 16px;
    border: 1px solid #cfdafa;
    border-radius: 2px;
    background-color: #3f6ae0;
}
.close.cap {
    padding: 2px;
    background-color: #b8606e;
}
.min {
    background: linear-gradient(#fff, #fff) 3px 9px / 5px 2px no-repeat #3f6ae0;
}
.max::before {
    content: "";
    display: block;
    height: 8px;
    margin: 0 2px;
    border: 1px solid #fff;
    border-top-width: 2px;
}
.menu {
    display: flex;
    gap: 10px;
    height: 15px;
    padding: 2px 5px 0;
    border-bottom: 1px solid #fff;
}
.menu a {
    color: #a4a090;
    text-decoration: none;
    white-space: nowrap;
}
.toolbar {
    display: flex;
    gap: 7px;
    padding: 2px 2px 0;
}
.group {
    display: flex;
    height: 20px;
    border-bottom: 1px solid #aaa798;
}
.group button {
    display: flex;
    justify-content: center;
    align-items: center;
    width: 20px;
    background: linear-gradient(#fff, #e8e5d8);
    border-right: 1px solid #c8c5b6;
}
.group button:first-child, .group button:last-child {
    width: 22px;
}
.group svg {
    flex: none;
    width: 20px;
    height: 18px;
}
.group .on {
    background: #a8a490;
}
.pivot {
    display: grid;
    grid-template-columns: 32px 54px;
    grid-auto-rows: 11px;
    align-items: center;
    margin-bottom: -2px;
}
.pair {
    display: flex;
    align-items: center;
    gap: 2px;
}
.flat {
    display: flex;
    align-items: center;
    justify-content: center;
    gap: 4px;
    flex: none;
    height: 10px;
    padding: 0 4px;
    line-height: 9px;
    white-space: nowrap;
    background: linear-gradient(#fff, #f0ede2);
    border: solid #b8b5a6;
    border-width: 0 1px 1px 0;
}
.pivot .flat {
    width: 26px;
}
.flat .tri {
    width: 6px;
    height: 5px;
}
.dim {
    color: #b5b2a2;
}
.dim .tri {
    background: #b5b2a2;
}
.spin {
    width: 5px;
    height: 8px;
    margin-left: 2px;
    background: #777;
    clip-path: polygon(50% 0, 100% 40%, 0 40%, 0 60%, 100% 60%, 50% 100%, 0 60%, 0 40%);
}
.pick {
    position: relative;
    display: block;
    height: 11px;
    background: linear-gradient(#fff, #f0ede2);
    border: solid #b8b5a6;
    border-width: 0 1px 1px 0;
}
.pick select {
    display: block;
    appearance: none;
    width: 100%;
    height: 10px;
    padding: 0 0 0 3px;
    line-height: 10px;
    opacity: 1;
    background: none;
}
.pick::after {
    content: "";
    position: absolute;
    right: 3px;
    top: 3px;
    width: 6px;
    height: 5px;
    background: currentColor;
    clip-path: polygon(0 0, 100% 0, 50% 100%);
    pointer-events: none;
}
.pivot .pick {
    width: 28px;
}
.second {
    padding-top: 3px;
}
.split {
    position: relative;
}
.split .flat {
    width: 54px;
    justify-content: flex-start;
}
.tooltip {
    position: absolute;
    z-index: 2;
    left: 35px;
    top: 1px;
    padding: 0 2px;
    line-height: 11px;
    white-space: nowrap;
    background: #ffffe1;
    border: 1px solid #111;
    box-shadow: 1px 1px 2px #777;
}
.tabs {
    display: flex;
    align-items: flex-end;
    height: 14px;
    padding: 0 2px 0 1px;
}
.tabs button {
    height: 12px;
    padding: 0 4px;
    background: #cdcab8;
    border: 1px solid #aaa798;
    border-bottom: 0;
    border-radius: 0 4px 0 0;
}
.tabs .current {
    height: 13px;
    background: #f6f4ec;
}
.tabs .tabclose {
    margin-left: auto;
    padding: 0;
    background: none;
    border: 0;
    font-weight: bold;
    font-size: 11px;
}

/* viewports */
.views {
    flex: 1;
    display: grid;
    grid-template-columns: 12px 413fr 318fr;
    grid-template-rows: 395fr 120fr 13px;
    min-height: 0;
    background: #fff;
}
.view {
    position: relative;
    overflow: hidden;
    border-right: 1px solid #222;
    border-bottom: 1px solid #222;
}
.view:nth-child(3n) {
    border-right: 0;
}
.view:nth-child(n+5) {
    border-bottom: 0;
}
.scene {
    position: absolute;
    inset: 0;
    width: 100%;
    height: 100%;
}
.viewbar {
    position: relative;
    display: flex;
    align-items: center;
    gap: 6px;
    height: 13px;
    padding: 0 2px 0 12px;
    background: linear-gradient(#e0e0e0e0, #c4c4c4e0);
}
.viewbar.active {
    height: 14px;
    color: #fff;
    background: linear-gradient(#858585e0, #9c9c9ce0);
}
.viewbar h3 {
    font-size: 10px;
    white-space: nowrap;
}
.viewbar svg {
    width: 12px;
    height: 12px;
}
.viewbar .end {
    margin-left: auto;
}
.ruler {
    position: relative;
    overflow: hidden;
}
.ruler svg {
    position: absolute;
    inset: 0;
    width: 100%;
    height: 100%;
}
.ruler b {
    position: relative;
    display: block;
    font-weight: normal;
}
.ruler.side {
    display: flex;
    flex-direction: column;
    padding: 2px 1px;
}
.ruler .tri {
    width: 6px;
    height: 6px;
}
.low {
    margin-top: auto;
}
.ruler.corner {
    display: flex;
    padding: 0 1px;
}
.ruler.corner .right {
    align-self: center;
}
.ruler:nth-child(8) b {
    padding: 2px 0 0 4px;
}
.ruler.end {
    display: flex;
    align-items: center;
    justify-content: flex-end;
    gap: 4px;
    padding: 2px 2px 0 0;
}
.status {
    display: flex;
    justify-content: flex-end;
    height: 11px;
    padding-right: 12px;
}
.status output {
    width: 30px;
    margin-right: 16px;
    text-align: right;
}
.status .unit {
    width: 37px;
}
.status .coord {
    width: 51px;
    margin-left: 2px;
}

/* right hand panels */
.panel {
    padding-bottom: 3px;
    border-width: 0 4px 3px 4px;
}
.panel .titlebar {
    padding: 0 2px 0 1px;
}
.panel h2 {
    flex: 1;
    font-size: 10px;
}
.line {
    display: flex;
    align-items: center;
}
.camera-tools {
    display: flex;
    padding: 1px 3px 3px;
}
.camera-tools button {
    width: 19px;
    height: 19px;
    background: linear-gradient(#fff, #f0ede2);
    border: solid #c0bdae;
    border-width: 0 1px 1px 0;
}
.camera-tools .first {
    margin-left: 4px;
}
.camera-tools svg {
    width: 18px;
    height: 17px;
}
.camera {
    display: flex;
    gap: 4px;
    padding: 0 3px;
}
.pad {
    display: grid;
    grid-template: 28px 12px 28px / 28px 12px 28px;
    border: solid #b0ad9e;
    border-width: 1px 0 0 1px;
}
.pad i {
    border: solid #b0ad9e;
    border-width: 0 1px 1px 0;
}
.step {
    display: flex;
}
.step button {
    flex: 1;
    height: 11px;
    color: #bbb8aa;
    background: #f7f5ee;
    border: solid #c4c1b2;
    border-width: 0 1px 1px 0;
}
.options {
    flex: 1;
}
.options > label, .options .line > label {
    display: flex;
    align-items: center;
    gap: 3px;
    height: 11px;
}
.options > .line:first-child {
    gap: 2px;
    margin-bottom: 1px;
}
.cam {
    width: 88px;
}
.options .flat {
    gap: 2px;
    padding: 0 1px;
}
input[type="radio"], input[type="checkbox"] {
    appearance: none;
    width: 9px;
    height: 9px;
    background: #fff;
    border: 1px solid #c0bdae;
}
input[type="radio"] {
    border-radius: 50%;
}
input[type="radio"]:checked {
    background: radial-gradient(#111 45%, #fff 50%);
}
.num {
    width: 31px;
    height: 10px;
    margin: 0 3px 0 auto;
    padding-right: 1px;
    text-align: right;
    background: #fff;
}
.zoomline {
    padding-right: 17px;
}
.speed {
    gap: 6px;
    margin: 3px 0 1px;
}
.speed .pick {
    width: 48px;
}
.options .dim {
    gap: 5px;
}
.memory {
    padding: 6px 3px 2px;
    gap: 1px;
}
.memory .load {
    margin-left: 8px;
}
.panel .fold {
    margin-right: 20px;
    padding-left: 6px;
}
.sets {
    display: grid;
    grid-template-columns: 59px 37px 37px 27px;
    grid-auto-rows: 11px;
    column-gap: 1px;
    align-items: center;
    padding: 0 4px 3px;
}
.shape {
    justify-self: end;
    width: 27px;
}
.browser {
    padding: 0;
    border-color: #0a4fe0;
}
.browser .titlebar {
    height: 18px;
    color: #fff;
    background: linear-gradient(#0a50d8, #0868f8 30%, #0864f4 80%, #0450d0);
}
.browser .close {
    background-color: #e04a20;
}
.browser-tools {
    height: 11px;
    padding: 0 2px 0 1px;
    background: #f8f6ee;
}
.browser-tools .flat {
    padding: 0 3px 0 5px;
}
.arrow {
    width: 12px;
    background: none;
}
.arrow svg {
    width: 12px;
    height: 8px;
}
.menu-tri {
    margin-left: auto;
}
.splitter {
    display: flex;
    justify-content: center;
    align-items: center;
    height: 5px;
    background: #fbfaf5;
    border-bottom: 1px solid #aaa798;
}
.splitter .tri {
    width: 5px;
    height: 3px;
}
.listing {
    flex: 1;
    display: flex;
}
.tree {
    flex: 1;
    align-self: flex-start;
    margin: 2px 1px 0 2px;
    padding-bottom: 3px;
    background: #e4e4e4;
    border: 1px solid #999;
}
.root {
    display: flex;
    gap: 9px;
    padding-left: 3px;
    line-height: 10px;
}
.root .tri {
    width: 3px;
    height: 6px;
    background: #888;
    margin-top: 1px;
}
.tree ul {
    display: grid;
    grid-template-rows: repeat(11, 1fr);
    height: 115px;
    margin: 0 3px 0 7px;
    border: 1px solid #999;
    border-top: 0;
    list-style: none;
}
.tree li {
    padding-left: 16px;
    line-height: 9px;
    border-top: 1px solid #999;
}
.vscroll {
    display: flex;
    flex-direction: column;
    justify-content: space-between;
    width: 12px;
    background: #fafaf7;
}
.hscroll {
    display: flex;
    justify-content: space-between;
    height: 13px;
    padding-right: 13px;
    background: #fafaf7;
}
.chev {
    display: grid;
    place-items: center;
    width: 12px;
    height: 12px;
    background: #f0eee4;
    border: 1px solid #dddacc;
}
.chev::before {
    content: "";
    width: 5px;
    height: 5px;
    border: solid #bbb8aa;
    border-width: 0 1px 1px 0;
    transform: rotate(45deg);
}
.chev.up::before {
    transform: rotate(225deg);
}
.chev.left::before {
    transform: rotate(135deg);
}
.chev.right::before {
    transform: rotate(-45deg);
}
.count {
    height: 12px;
    padding-left: 2px;
}
```
FILE: scene.js
```
const NS = "http://www.w3.org/2000/svg";

const add = (parent, name, attrs) => {
    const node = document.createElementNS(NS, name);
    for (const key in attrs) node.setAttribute(key, attrs[key]);
    parent.appendChild(node);
    return node;
};

const line = (parent, x1, y1, x2, y2, stroke, width = 1) =>
    add(parent, "line", { x1, y1, x2, y2, stroke, "stroke-width": width });

// 8px grid with a heavier line every 80px, counted from the axis
const grid = (svg, ox, oy) => {
    for (let i = -40; i < 60; i++) {
        const color = i % 10 ? "#f0f0f0" : "#dedede";
        line(svg, ox + i * 8, 0, ox + i * 8, 400, color);
        line(svg, 0, oy + i * 8, 420, oy + i * 8, color);
    }
};

// top view
const top_ = document.getElementById("top");
grid(top_, 219.5, 171.5);
line(top_, 219.5, 0, 219.5, 400, "#a8a8d8");
line(top_, 0, 171.5, 420, 171.5, "#c89090");
line(top_, 0, 36.5, 81, 36.5, "#f04848");
line(top_, 359, 36.5, 420, 36.5, "#f04848");
const tips = [
    [-4, 42], [96, 58], [158, 86], [194, 112], [212, 131], [220, 146], [228, 131],
    [247, 112], [281, 87], [344, 60], [416, 58], [378, 121], [322, 161], [283, 179],
    [257, 184], [240, 184], [249, 199], [257, 225], [260, 266], [253, 335], [218.5, 400],
    [184, 335], [175, 266], [180, 224], [188, 198], [197, 183], [181, 183], [155, 177],
    [116, 159], [62, 119]
];
for (const [x, y] of tips) {
    const sx = 219.5 + (x - 219.5) * 0.02;
    const sy = 171.5 + (y - 171.5) * 0.02;
    line(top_, sx, sy, x, y, "#3a3a3a", 2.4).setAttribute("stroke-linecap", "round");
    line(top_, sx, sy, x, y, "#d8d8d8", 0.9);
}
add(top_, "path", { d: "M214 173l3-6 3 1v4zm7 1v-5l4 3-2 3z", fill: "#000" });

// perspective view, drawn at three units to the pixel
const persp = document.getElementById("persp");
add(persp, "rect", { width: "100%", height: "100%", fill: "#fff" });
add(persp, "rect", { width: "100%", height: 86, fill: "#d9d9d9" });
add(persp, "rect", { y: 323, width: "100%", height: 100, fill: "#d9d9d9" });
const world = add(persp, "g", { transform: "translate(-4 -3) scale(.3333)" });
const floor = [
    [290, 135, 970, 218], [230, 150, 970, 245], [170, 167, 970, 275], [110, 185, 970, 310],
    [40, 205, 970, 360], [10, 235, 970, 410], [10, 275, 970, 475], [10, 330, 970, 560],
    [10, 400, 970, 690], [10, 590, 970, 950], [10, 730, 970, 1220], [10, 1050, 250, 1195],
    [290, 135, 10, 208], [370, 145, 10, 238], [450, 155, 10, 275], [540, 166, 10, 325],
    [640, 178, 10, 390], [740, 190, 10, 470], [860, 205, 10, 600], [970, 218, 10, 760],
    [970, 290, 10, 930], [970, 430, 200, 1195], [970, 690, 600, 1195]
];
for (const f of floor) line(world, ...f, "#cacaca", 2);
line(world, 12, 466, 968, 772, "#c89898", 3);
line(world, 640, 512, 968, 272, "#a0a0d8", 3);
line(world, 12, 127, 288, 165, "#e04848", 4);
const blades = [
    [12, 156, 12, 145], [265, 195, 276, 191, 1], [461, 275, 474, 275, 1], [582, 360, 595, 362, 1],
    [639, 440, 650, 444, 1], [648, 508, 657, 513, 1], [804, 474, 808, 481, 1], [968, 473, 968, 483],
    [968, 533, 968, 543], [968, 586, 968, 596], [968, 633, 968, 646], [968, 685, 968, 696],
    [968, 740, 968, 754], [968, 812, 968, 829], [943, 904, 930, 910, 1], [686, 988, 660, 1004, 2],
    [669, 798, 654, 803, 1], [539, 1195, 502, 1195], [288, 1195, 248, 1195], [20, 1195, 12, 1150],
    [12, 966, 12, 938], [12, 846, 12, 827], [12, 767, 12, 752], [12, 706, 12, 692],
    [12, 653, 12, 642], [162, 608, 162, 600, 1], [25, 557, 22, 549, 1], [12, 498, 12, 488],
    [12, 430, 12, 420], [12, 327, 12, 318]
];
for (const [x1, y1, x2, y2, cap] of blades) {
    const dx = (x1 + x2) / 2 - 488;
    const dy = (y1 + y2) / 2 - 622;
    const len = Math.hypot(dx, dy);
    const reach = 1 / Math.hypot(dx / 34, dy / 12);
    const half = 3 + Math.hypot(x2 - x1, y2 - y1) * 0.18;
    const side = Math.sign(-dy * (x2 - x1) + dx * (y2 - y1));
    const nx = -dy / len * half * side;
    const ny = dx / len * half * side;
    const bx = 488 + dx * reach;
    const by = 622 + dy * reach;
    const tipX = (x1 + x2) / 2 + dx / len * 12 * (cap || 0);
    const tipY = (y1 + y2) / 2 + dy / len * 12 * (cap || 0);
    const end = cap ? `Q${tipX} ${tipY} ${x2} ${y2}` : `M${x2} ${y2}`;
    add(world, "path", {
        d: `M${bx - nx} ${by - ny}L${x1} ${y1}${end}L${bx + nx} ${by + ny}`,
        fill: "none", stroke: "#333", "stroke-width": 2.6
    });
}
add(world, "ellipse", { cx: 490, cy: 620, rx: 52, ry: 21, fill: "none", stroke: "#111", "stroke-width": 8, "stroke-dasharray": "3 4" });
add(world, "ellipse", { cx: 490, cy: 620, rx: 34, ry: 13, fill: "#fff", stroke: "#111", "stroke-width": 10, "stroke-dasharray": "19 1" });
add(world, "ellipse", { cx: 488, cy: 620, rx: 20, ry: 9, fill: "#fff" });
line(world, 472, 615, 510, 626, "#d09090", 2);

// front view
const front = document.getElementById("front");
grid(front, 219.5, 66.5);
line(front, 219.5, 0, 219.5, 400, "#90c890");
line(front, 0, 66.5, 4, 66.5, "#00e0e0");
line(front, 4, 66.5, 81, 66.5, "#f03030");
line(front, 81, 66.5, 208, 66.5, "#222");
line(front, 227, 66.5, 359, 66.5, "#222");
line(front, 359, 66.5, 420, 66.5, "#f03030");
line(front, 219.5, 59, 219.5, 75, "#111");

// right view
const right = document.getElementById("right");
grid(right, 191.5, 66.5);
line(right, 191.5, 0, 191.5, 400, "#70b070");
line(right, 0, 66.5, 3, 66.5, "#f03030");
line(right, 3, 66.5, 180, 66.5, "#222");
line(right, 196, 66.5, 245, 66.5, "#222");
line(right, 245, 66.5, 420, 66.5, "#f03030");
line(right, 187.5, 59, 187.5, 75, "#111");

// rulers
const sideRuler = (id, origin, from, to) => {
    const svg = document.getElementById(id);
    for (let i = -30; i < 40; i++) {
        const y = origin + i * 8;
        if (y < from || y > to) continue;
        const size = i % 10 === 0 ? 4 : i % 2 ? 1 : 3;
        line(svg, 11 - size, y, 11, y, "#333");
    }
};
const bottomRuler = (id, origin) => {
    const svg = document.getElementById(id);
    for (let i = -40; i < 40; i++) {
        const x = origin + i * 8;
        const size = i % 10 === 0 ? 4 : i % 2 ? 1 : 2;
        line(svg, x, 1, x, 1 + size, "#333");
    }
};
sideRuler("ruler-top", 171.5, 16, 394);
sideRuler("ruler-front", 66.5, 0, 114);
bottomRuler("ruler-x", 219.5);
bottomRuler("ruler-z", 191.5);
```
